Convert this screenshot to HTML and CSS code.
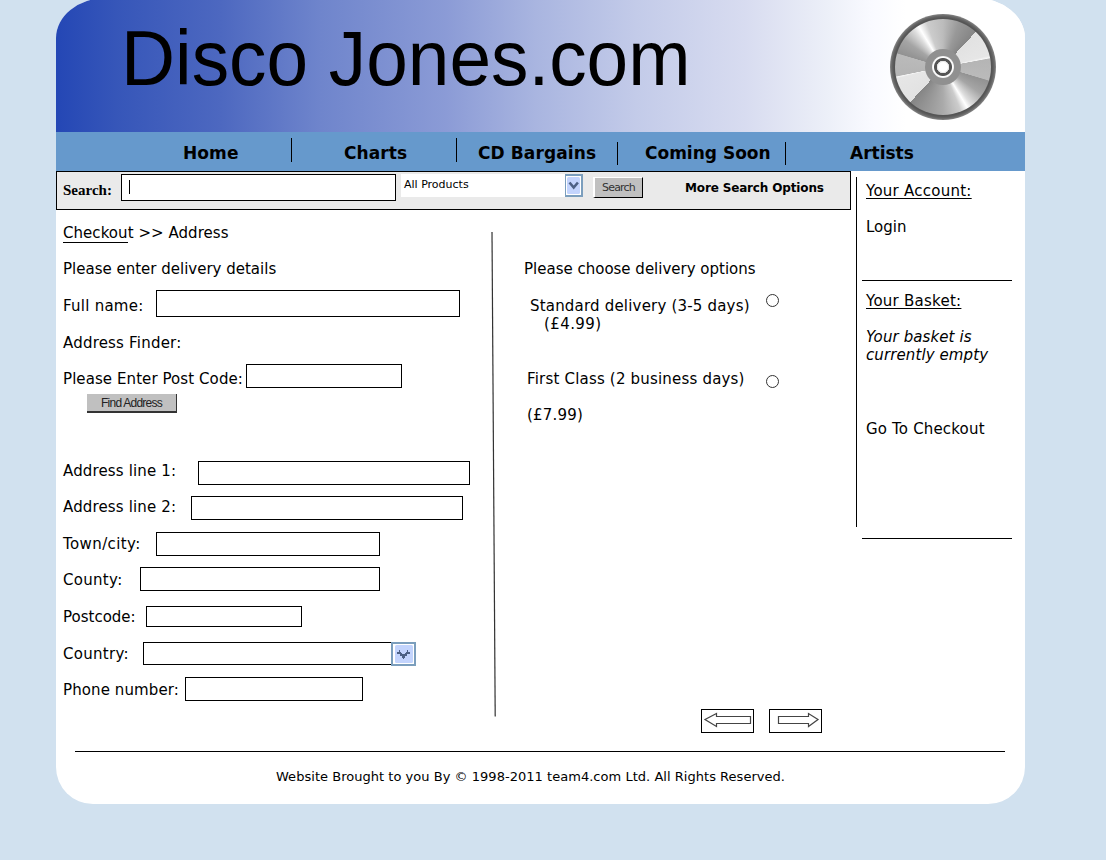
FILE: index.html
```html
<!DOCTYPE html>
<html lang="en">
<head>
<meta charset="utf-8">
<title>Disco Jones.com - Checkout</title>
<link rel="stylesheet" href="styles.css">
</head>
<body>
<div class="page">
  <header class="banner">
    <h1 class="brand">Disco Jones.com</h1>
    <div class="disc"><div class="disc-face"><div class="disc-hub"><div class="disc-hole"></div></div></div></div>
  </header>
  <nav class="nav">
    <a class="tab home">Home</a><i class="sep"></i>
    <a class="tab charts">Charts</a><i class="sep"></i>
    <a class="tab bargains">CD Bargains</a><i class="sep low"></i>
    <a class="tab soon">Coming Soon</a><i class="sep low"></i>
    <a class="tab artists">Artists</a>
  </nav>
  <div class="columns">
    <main class="main">
      <div class="search">
        <b class="search-label">Search:</b>
        <div class="search-input"><i class="caret"></i></div>
        <div class="select"><span class="select-text">All Products</span>
          <svg class="arrow" width="18" height="23" viewBox="0 0 18 23"><rect width="18" height="23" fill="#7b9ebd"/><rect x="1" y="2" width="15" height="19" fill="#fff"/><rect x="2" y="3" width="13" height="17" rx="1.5" fill="#c3d4fd"/><path d="M4.500 8.500l4.200 5 4.200-5" fill="none" stroke="#4d6185" stroke-width="2.600"/></svg>
        </div>
        <button class="search-btn">Search</button>
        <b class="more">More Search Options</b>
      </div>
      <div class="checkout">
        <form class="form">
          <div class="crumbs"><span class="crumb-link">Checkout</span> &gt;&gt; Address</div>
          <div class="row r-intro">Please enter delivery details</div>
          <div class="row r-name"><label>Full name:</label><input></div>
          <div class="row r-finder">Address Finder:</div>
          <div class="row r-find"><label>Please Enter Post Code:</label><input></div>
          <button type="button" class="find-btn">Find Address</button>
          <div class="row r-a1"><label>Address line 1:</label><input></div>
          <div class="row r-a2"><label>Address line 2:</label><input></div>
          <div class="row r-town"><label>Town/city:</label><input></div>
          <div class="row r-county"><label>County:</label><input></div>
          <div class="row r-post"><label>Postcode:</label><input></div>
          <div class="row r-country"><label>Country:</label><input><svg class="arrow" width="25" height="24" viewBox="0 0 25 24"><rect width="25" height="24" fill="#7b9ebd"/><rect x="2" y="2" width="21" height="20" fill="#fff"/><rect x="4" y="3" width="18" height="18" rx="1.5" fill="#c3d4fd"/><path d="M8 8v2H6v2h3v2h2v2h1v1h1v-1h1v-2h2v-2h3v-2h-2V8h-1v2h-1v1h-1v1h-3v-1h-1v-1H9V8z" fill="#4d6185"/></svg></div>
          <div class="row r-phone"><label>Phone number:</label><input></div>
        </form>
        <svg class="divider" width="6" height="485" viewBox="0 0 6 485"><path d="M1 0L4.200 484.500" stroke="#333" stroke-width="1.200"/></svg>
        <section class="options">
          <div class="opt-title">Please choose delivery options</div>
          <div class="opt standard"><div class="opt-text">Standard delivery (3-5 days)<br><span class="price">(£4.99)</span></div><i class="radio"></i></div>
          <div class="opt first"><div class="opt-text">First Class (2 business days)<br><br>(£7.99)</div><i class="radio"></i></div>
          <div class="pager">
            <div class="page-btn"><svg width="51" height="22" viewBox="0 0 51 22"><path d="M3 9.500L14.500 3.500V6.500H48.500V13.500H14.500V16.500Z" fill="#fff" stroke="#444" stroke-width="1.200"/></svg></div>
            <div class="page-btn"><svg width="51" height="22" viewBox="0 0 51 22"><path d="M48 9.500L38.500 3.500V6.500H8.500V13.500H38.500V16.500Z" fill="#fff" stroke="#444" stroke-width="1.200"/></svg></div>
          </div>
        </section>
      </div>
    </main>
    <aside class="side">
      <div class="side-line"></div>
      <div class="side-body">
        <div class="account"><u>Your Account:</u><span>Login</span></div>
        <div class="basket"><u>Your Basket:</u><em>Your basket is<br>currently empty</em><span class="go">Go To Checkout</span></div>
      </div>
    </aside>
  </div>
  <footer class="footer">Website Brought to you By © 1998-2011 team4.com Ltd. All Rights Reserved.</footer>
</div>
</body>
</html>
```
FILE: styles.css
```css
* { box-sizing: border-box; }
body { margin: 0; height: 860px; overflow: hidden; background: #d1e1ef; font: 15px/18px Verdana, "DejaVu Sans", sans-serif; color: #000; }
.page { width: 969px; height: 806px; margin: -2px 0 0 56px; background: #fff; border-radius: 50px 50px 37px 37px / 40px 40px 37px 37px; overflow: hidden; }

.banner { height: 134px; padding: 2px 29px 0 65px; display: flex; justify-content: space-between; background: linear-gradient(90deg, #2447b5 0, #3656b9 60px, #4d68c0 165px, #6f85cc 265px, #8b9bd6 390px, #a9b5e0 480px, #c3cbe9 580px, #d8dcf0 690px, #eceff8 770px, #f9faff 815px, #fff 850px); }
.brand { margin: 17px 0 0; height: 85px; font: 74.5px/85px "Liberation Sans", Arial, sans-serif; white-space: nowrap; transform: scale(1.004, 1.05); transform-origin: 0 69px; }
.disc { width: 106px; height: 106px; margin-top: 14px; border-radius: 50%; padding: 5px; background: radial-gradient(circle, #555 49px, #666 51px, #858585 53px); }
.disc-face { height: 96px; border-radius: 50%; padding: 30px; background: conic-gradient(#bcbcbc 0, #999 20deg, #858585 43deg, #e2e2e2 43deg, #e6e6e6 76deg, #f5f5f5 79deg, #b5b5b5 80deg, #bababa 106deg, #929292 107deg, #a5a5a5 125deg, #dedede 143deg, #fff 149deg, #ccc 158deg, #aaa 180deg, #858585 223deg, #e2e2e2 223deg, #e6e6e6 256deg, #f5f5f5 258deg, #b5b5b5 259deg, #bababa 286deg, #929292 287deg, #a5a5a5 305deg, #dedede 322deg, #fff 329deg, #ccc 340deg, #bcbcbc 360deg); }
.disc-hub { height: 36px; border-radius: 50%; background: #909090; padding: 7px; }
.disc-hole { height: 22px; border-radius: 50%; background: radial-gradient(circle, #fff 4.500px, #ddd 6px, #555 6.500px, #555 8.500px, #fff 9.500px, #eee 11px); }

.nav { height: 39px; background: #6699cc; display: flex; font-weight: bold; font-size: 17px; line-height: 20px; white-space: nowrap; }
.tab { margin-top: 11px; flex: none; }
.home { width: 235px; padding-left: 127px; letter-spacing: 0.1px; }
.charts { width: 164px; padding-left: 52px; letter-spacing: 0.1px; }
.bargains { width: 160px; padding-left: 21px; letter-spacing: 0.1px; }
.soon { width: 167px; padding-left: 27px; }
.artists { padding-left: 64px; }
.sep { width: 1px; height: 24px; margin-top: 6px; background: #000; }
.sep.low { height: 23px; margin-top: 10px; }

.columns { display: flex; height: 580px; }
.main { width: 795px; }
.search { height: 39px; border: 1px solid #000; background: #eaeaea; display: flex; align-items: flex-start; padding: 2px 0 0 6px; white-space: nowrap; }
.search-label { width: 58px; margin-top: 7px; font: bold 15px/18px "Liberation Serif", serif; }
.search-input { width: 275px; height: 27px; border: 1px solid #000; background: #fff; padding: 5px 0 0 7px; }
.caret { display: block; width: 1px; height: 14px; background: #000; }
.select { width: 182px; height: 23px; margin-left: 5px; background: #fff; display: flex; justify-content: space-between; padding-left: 3px; }
.select-text { font-size: 11px; line-height: 21px; }
.arrow { display: block; flex: none; }
.search-btn { width: 50px; height: 21px; margin: 3px 0 0 10px; padding: 0; background: #c0c0c0; border: solid; border-color: #fff #000 #000 #fff; border-width: 1px 1px 1px 2px; color: #333; font: 11px/19px Tahoma, "DejaVu Sans", sans-serif; letter-spacing: -0.8px; }
.more { margin: 5px 0 0 42px; font-size: 12px; letter-spacing: -0.15px; }

.checkout { display: flex; align-items: flex-start; }
.form { width: 435px; padding: 14px 0 0 7px; margin: 0; }
.crumb-link { display: inline-block; height: 19px; background: linear-gradient(#000, #000) 0 18px / 65px 1px no-repeat; }
.crumbs { height: 18px; white-space: nowrap; letter-spacing: 0.05px; }
.row { display: flex; align-items: flex-start; height: 18px; white-space: nowrap; }
.row label { letter-spacing: 0.15px; }
.row input { flex: none; border: 1px solid #000; border-radius: 0; background: #fff; height: 24px; padding: 0 4px; font: inherit; }
.r-intro { margin-top: 18px; }
.r-name { margin-top: 19px; }
.r-name label { width: 93px; letter-spacing: 0.25px; }
.r-name input { width: 304px; height: 27px; margin-top: -7px; }
.r-finder { margin-top: 19px; letter-spacing: 0.2px; }
.r-find { margin-top: 18px; }
.r-find label { width: 183px; letter-spacing: 0.08px; }
.r-find input { width: 156px; margin-top: -6px; }
.find-btn { display: block; width: 90px; height: 19px; margin: 6px 0 0 24px; padding: 0; background: #c0c0c0; border: solid #333; border-width: 0 1px 2px 0; color: #222; font: 12px/19px "Liberation Sans", Arial, sans-serif; letter-spacing: -0.75px; }
.r-a1 { margin-top: 49px; }
.r-a1 label { width: 135px; }
.r-a1 input { width: 272px; margin-top: -1px; }
.r-a2 { margin-top: 18px; }
.r-a2 label { width: 128px; }
.r-a2 input { width: 272px; margin-top: -2px; }
.r-town { margin-top: 19px; }
.r-town label { width: 93px; letter-spacing: 0.4px; }
.r-town input { width: 224px; margin-top: -3px; }
.r-county { margin-top: 18px; }
.r-county label { width: 77px; letter-spacing: 0.3px; }
.r-county input { width: 240px; margin-top: -4px; }
.r-post { margin-top: 19px; }
.r-post label { width: 83px; letter-spacing: 0; }
.r-post input { width: 156px; height: 21px; margin-top: -2px; }
.r-country { margin-top: 19px; }
.r-country label { width: 80px; letter-spacing: 0.3px; }
.r-country input { width: 248px; height: 23px; margin-top: -3px; border-right: 0; }
.r-country .arrow { margin-top: -3px; }
.r-phone { margin-top: 18px; }
.r-phone label { width: 122px; letter-spacing: 0.1px; }
.r-phone input { width: 178px; margin-top: -4px; }

.divider { display: block; margin-top: 22px; flex: none; }
.options { width: 354px; padding: 50px 0 0 28px; white-space: nowrap; }
.opt-title { margin-left: -1px; }
.opt { display: flex; letter-spacing: 0.19px; }
.standard { margin: 19px 0 0 5px; height: 73px; }
.first { margin-left: 2px; height: 54px; }
.price { padding-left: 14px; letter-spacing: 0.4px; }
.opt-text { width: 236px; }
.first .opt-text { width: 239px; }
.radio { width: 13px; height: 13px; margin-top: -3px; border: 1px solid #333; border-radius: 50%; }
.first .radio { margin-top: 5px; }
.pager { display: flex; gap: 15px; margin: 285px 0 0 176px; }
.page-btn { width: 53px; height: 24px; border: 1px solid #000; }
.page-btn svg { display: block; }

.side { display: flex; padding: 6px 0 0 5px; }
.side-line { width: 1px; height: 350px; background: #000; }
.side-body { width: 150px; margin-left: 5px; white-space: nowrap; }
.side u, .side span, .side em { display: block; padding-left: 4px; }
.side u { letter-spacing: 0.25px; text-decoration-thickness: 1px; text-underline-offset: 2px; }
.account { height: 104px; padding-top: 5px; border-bottom: 1px solid #000; }
.account span, .basket em { margin-top: 18px; }
.basket em { letter-spacing: 0.1px; }
.basket { height: 258px; padding-top: 11px; border-bottom: 1px solid #000; }
.basket .go { margin-top: 56px; letter-spacing: 0.17px; }

.footer { margin: 0 20px 0 19px; border-top: 1px solid #000; padding: 16px 0 0 201px; font-size: 13px; letter-spacing: 0.03px; white-space: nowrap; }
```
